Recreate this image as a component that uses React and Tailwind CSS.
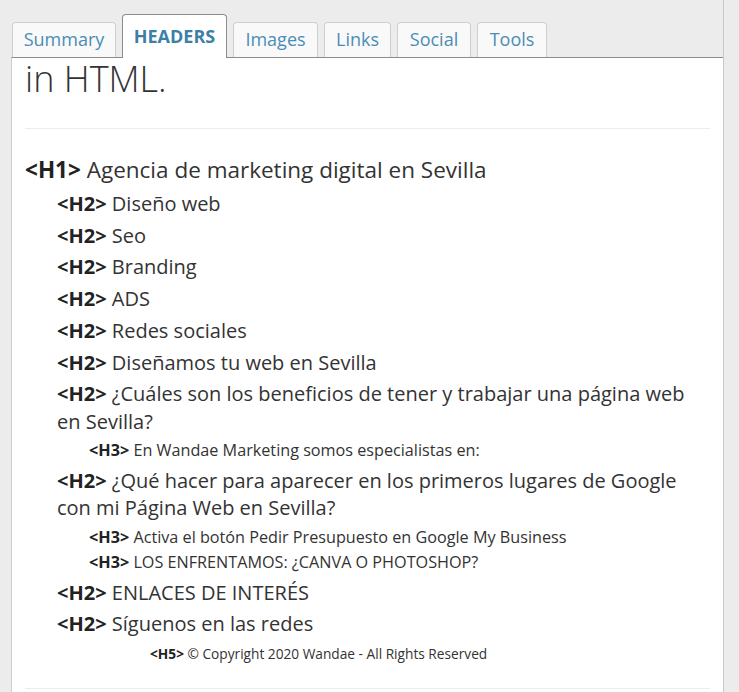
import React from 'react';

const tabs = [
  { label: 'Summary', w: 'w-[104px]' },
  { label: 'HEADERS', w: 'w-[105px]', active: true },
  { label: 'Images', w: 'w-[85px]' },
  { label: 'Links', w: 'w-[67px]' },
  { label: 'Social', w: 'w-[74px]' },
  { label: 'Tools', w: 'w-[70px]' },
];

const headers = [
  { tag: 'H1', text: 'Agencia de marketing digital en Sevilla' },
  { tag: 'H2', text: 'Diseño web' },
  { tag: 'H2', text: 'Seo' },
  { tag: 'H2', text: 'Branding' },
  { tag: 'H2', text: 'ADS' },
  { tag: 'H2', text: 'Redes sociales' },
  { tag: 'H2', text: 'Diseñamos tu web en Sevilla' },
  { tag: 'H2', text: '¿Cuáles son los beneficios de tener y trabajar una página web en Sevilla?' },
  { tag: 'H3', text: 'En Wandae Marketing somos especialistas en:' },
  { tag: 'H2', text: '¿Qué hacer para aparecer en los primeros lugares de Google con mi Página Web en Sevilla?' },
  { tag: 'H3', text: 'Activa el botón Pedir Presupuesto en Google My Business' },
  { tag: 'H3', text: 'LOS ENFRENTAMOS: ¿CANVA O PHOTOSHOP?' },
  { tag: 'H2', text: 'ENLACES DE INTERÉS' },
  { tag: 'H2', text: 'Síguenos en las redes' },
  { tag: 'H5', text: '© Copyright 2020 Wandae - All Rights Reserved' },
];

const levelStyle = {
  H1: 'pl-0 text-[22.5px] leading-[30px] pt-[2px] pb-[3px]',
  H2: 'pl-[32px] text-[20px] leading-[27.7px] py-[2px]',
  H3: 'pl-[64px] text-[16.2px] leading-[19px] py-[2px] mt-[1.5px] mb-[2.5px]',
  H5: 'pl-[125px] text-[13.7px] leading-[20px] py-[4px]',
};

export default function App() {
  return (
    <div className="h-[692px] w-[739px] overflow-hidden bg-[#ececec] font-['Open_Sans',sans-serif]">
      <div className="h-full w-[724px] border-r border-[#c8c8c8] flex flex-col">
        {/* Tabs */}
        <div className="flex items-end gap-[6px] pl-[12px] pt-[14px] relative z-10">
          {tabs.map((t) =>
            t.active ? (
              <div
                key={t.label}
                className={`${t.w} h-[44px] -mb-px flex items-center justify-center pb-[1px] rounded-t-[4px] border border-b-0 border-[#8c8c8c] bg-white text-[18px] font-bold text-[#3c7fa7]`}
              >
                {t.label}
              </div>
            ) : (
              <div
                key={t.label}
                className={`${t.w} h-[35px] flex items-center justify-center pb-[2px] rounded-t-[4px] border border-b-0 border-[#cfcfcf] bg-[#f9f9f9] text-[18px] text-[#4a8db5]`}
              >
                {t.label}
              </div>
            )
          )}
        </div>

        {/* Panel */}
        <div className="ml-[11px] flex-1 border-l border-t border-l-[#cfcfcf] border-t-[#8c8c8c] bg-white pl-[13px] pr-[13px] overflow-hidden">
          <div className="text-[36px] font-light leading-[40px] text-[#333] mt-[1px]">in HTML.</div>
          <div className="mt-[29px] border-t border-[#ececec]" />

          <div className="mt-[24px] text-[#333]">
            {headers.map((h, i) => (
              <div key={i} className={levelStyle[h.tag]}>
                <span className="font-bold text-[#222]">&lt;{h.tag}&gt;</span> {h.text}
              </div>
            ))}
          </div>

          <div className="mt-[20px] border-t border-[#ececec]" />
        </div>
      </div>
    </div>
  );
}
